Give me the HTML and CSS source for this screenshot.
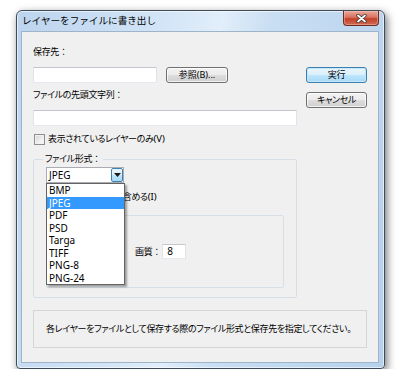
FILE: index.html
```html
<!DOCTYPE html>
<html lang="ja">
<head>
<meta charset="utf-8">
<title>レイヤーをファイルに書き出し</title>
<link rel="stylesheet" href="styles.css">
</head>
<body>
<div class="window">
  <div class="titlebar">
    <span class="title">レイヤーをファイルに書き出し</span>
    <span class="close">
      <svg width="11" height="9" viewBox="0 0 11 9">
        <path d="M2 1.5 L9 7.5 M9 1.5 L2 7.5" stroke="#3a3030" stroke-width="3.4" stroke-linecap="round" fill="none"/>
        <path d="M2 1.5 L9 7.5 M9 1.5 L2 7.5" stroke="#ffffff" stroke-width="1.8" stroke-linecap="round" fill="none"/>
      </svg>
    </span>
  </div>
  <div class="client">
    <div class="main">
      <div class="left">
        <div class="label">保存先<span class="colon">：</span></div>
        <div class="row-dest">
          <div class="textbox tb-dest"></div>
          <div class="btn btn-ref">参照(B)...</div>
        </div>
        <div class="label label-prefix">ファイルの先頭文字列<span class="colon">：</span></div>
        <div class="textbox tb-prefix"></div>
        <div class="check check-visible"><span class="cbox"></span><span>表示されているレイヤーのみ<span class="latin">(V)</span></span></div>
        <fieldset class="group">
          <legend>ファイル形式<span class="colon">：</span></legend>
          <div class="select-wrap">
            <div class="select">
              <span class="select-value">JPEG</span>
              <span class="select-arrow">
                <svg width="7" height="4" viewBox="0 0 7 4"><path d="M0 0 H7 L3.5 4 Z" fill="#1a1a1a"/></svg>
              </span>
            </div>
            <ul class="dropdown">
              <li>BMP</li>
              <li class="selected">JPEG</li>
              <li>PDF</li>
              <li>PSD</li>
              <li>Targa</li>
              <li>TIFF</li>
              <li>PNG-8</li>
              <li>PNG-24</li>
            </ul>
          </div>
          <div class="check check-icc"><span class="cbox"></span><span class="icc-text">ICC プロファイルを</span><span>含める<span class="latin">(I)</span></span></div>
          <fieldset class="group inner">
            <legend>JPEG オプション</legend>
            <div class="quality"><span>画質<span class="colon">：</span></span><span class="textbox tb-quality">8</span></div>
          </fieldset>
        </fieldset>
      </div>
      <div class="right">
        <div class="btn btn-default">実行</div>
        <div class="btn">キャンセル</div>
      </div>
    </div>
    <div class="desc">各レイヤーをファイルとして保存する際のファイル形式と保存先を指定してください。</div>
  </div>
</div>
</body>
</html>
```
FILE: styles.css
```css
html, body {
  margin: 0;
  padding: 0;
  background: #ffffff;
}
body {
  padding: 10px 0 0 16px;
  font-family: "Noto Sans", "Noto Sans CJK JP", sans-serif;
  font-size: 9px;
  letter-spacing: -0.35px;
  line-height: 12px;
  color: #000;
  font-feature-settings: "palt";
}
.colon {
  font-feature-settings: normal;
  letter-spacing: 0;
}
.latin {
  letter-spacing: 0;
  font-size: 9.5px;
}
.window {
  width: 369px;
  box-sizing: border-box;
  border: 1px solid #3d4a58;
  border-radius: 6px 6px 4px 4px;
  padding: 0 5px 5px 4px;
  background: linear-gradient(100deg, #bcd4ee 0%, #d3e5f7 35%, #e2eefa 48%, #c8def3 60%, #b6d1ec 100%);
  box-shadow: 2px 3px 8px rgba(0, 0, 0, 0.55), inset 0 0 0 1px rgba(255, 255, 255, 0.6);
}
.titlebar {
  height: 20px;
  display: flex;
  align-items: center;
  padding-left: 1px;
}
.title {
  font-size: 9.6px;
  letter-spacing: 0;
  font-feature-settings: normal;
  color: #000;
}
.close {
  margin-left: auto;
  align-self: flex-start;
  width: 34px;
  height: 14px;
  border: 1px solid #6e2c20;
  border-top: none;
  border-radius: 0 0 4px 4px;
  background: linear-gradient(#e9a99b, #d8725e 45%, #c4412a 55%, #cf6a52 100%);
  display: flex;
  align-items: center;
  justify-content: center;
  box-shadow: inset 0 0 0 1px rgba(255, 210, 200, 0.4);
}
.close svg { display: block; }
.client {
  width: 358px;
  box-sizing: border-box;
  border: 1px solid #9fb3c9;
  background: #f0f0f0;
  padding: 14px 11px 14px 11px;
}
.main {
  display: flex;
  gap: 9px;
}
.left {
  width: 264px;
  display: flex;
  flex-direction: column;
}
.right {
  width: 61px;
  padding-top: 21px;
  display: flex;
  flex-direction: column;
  gap: 9px;
}
.label {
  height: 12px;
}
.label-prefix {
  margin-top: 6px;
}
.row-dest {
  margin-top: 9px;
  display: flex;
  gap: 9px;
}
.textbox {
  box-sizing: border-box;
  height: 16px;
  background: #fff;
  border: 1px solid;
  border-color: #c3c6cc #e2e3ea #e3e9ef #e2e3ea;
  border-radius: 1px;
}
.tb-dest { width: 124px; }
.tb-prefix { width: 264px; margin-top: 9px; }
.btn {
  box-sizing: border-box;
  height: 16px;
  width: 61px;
  border: 1px solid #707070;
  border-radius: 3px;
  background: linear-gradient(#f2f2f2 0%, #ebebeb 50%, #dddddd 51%, #cfcfcf 100%);
  box-shadow: inset 0 0 0 1px rgba(255, 255, 255, 0.75);
  display: flex;
  align-items: center;
  justify-content: center;
  line-height: 12px;
}
.btn-ref { width: 62px; letter-spacing: 0; }
.btn-default {
  border-color: #3c7fb1;
  background: linear-gradient(#eaf6fd 0%, #d9f0fc 50%, #bee6fd 51%, #a7d9f5 100%);
  box-shadow: inset 0 0 0 1px #c5e5f8;
}
.check {
  display: flex;
  align-items: center;
  height: 12px;
  gap: 3px;
  white-space: nowrap;
}
.check-visible {
  margin-top: 7px;
  padding-left: 1px;
}
.cbox {
  box-sizing: border-box;
  width: 11px;
  height: 11px;
  border: 1px solid #8e8f8f;
  background: linear-gradient(135deg, #d2d4d6, #f4f4f4 70%, #ffffff);
  box-shadow: inset 0 0 0 1px #f0f0f0;
}
.group {
  margin: 8px 0 0 0;
  padding: 0 12px 9px 12px;
  border: 1px solid #d5dfe5;
  border-radius: 2px;
  min-width: 0;
}
.group legend {
  padding: 0 2px;
  margin-left: -3px;
  line-height: 12px;
  height: 12px;
}
.select-wrap {
  position: relative;
  margin-top: 2px;
  width: 78px;
  font-size: 10px;
  letter-spacing: 0;
}
.select {
  box-sizing: border-box;
  height: 16px;
  background: #fff;
  border: 1px solid #abadb3;
  display: flex;
  align-items: center;
  padding-left: 2px;
}
.select-value { flex: 1; }
.select-arrow {
  box-sizing: border-box;
  width: 12px;
  height: 14px;
  border: 1px solid #3c7fb1;
  border-radius: 2px;
  background: linear-gradient(#eaf6fd, #d9f0fc 50%, #bee6fd 51%, #a7d9f5);
  display: flex;
  align-items: center;
  justify-content: center;
}
.select-arrow svg { display: block; }
.dropdown {
  position: absolute;
  top: 16px;
  left: 0;
  z-index: 2;
  margin: 0;
  padding: 0;
  list-style: none;
  box-sizing: border-box;
  width: 79px;
  background: #fff;
  border: 1px solid #646464;
  box-shadow: 2px 2px 2px rgba(0, 0, 0, 0.35);
}
.dropdown li {
  height: 12.5px;
  line-height: 12.5px;
  padding-left: 2px;
}
.dropdown li.selected {
  background: #3399ff;
  color: #fff;
}
.check-icc {
  margin-top: 8px;
  gap: 0;
}
.check-icc .cbox {
  margin-right: 3px;
}
.icc-text {
  letter-spacing: -0.95px;
}
.group.inner {
  margin-top: 6px;
  padding: 0 0 28px 4px;
  width: 238px;
  box-sizing: border-box;
}
.quality {
  margin-top: 23px;
  margin-left: 84px;
  display: flex;
  align-items: center;
  gap: 1px;
  height: 15px;
}
.tb-quality {
  width: 24px;
  height: 15px;
  line-height: 13px;
  padding-left: 4px;
  font-size: 10px;
  letter-spacing: 0;
}
.desc {
  margin-top: 12px;
  box-sizing: border-box;
  height: 38px;
  border: 1px solid #d5d5d5;
  display: flex;
  align-items: center;
  padding-left: 12px;
  white-space: nowrap;
}
```
